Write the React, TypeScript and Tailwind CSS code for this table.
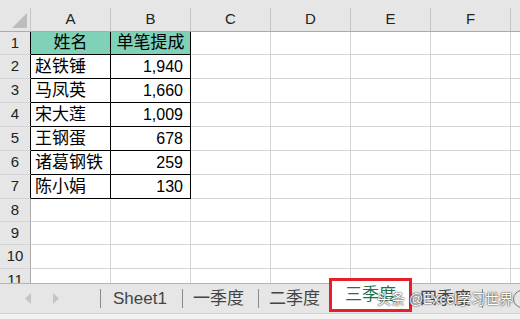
import * as React from 'react';

const COLS = ['A', 'B', 'C', 'D', 'E', 'F', 'G'];
const ROW_H = [23, 24, 24, 24, 24, 24, 24, 23, 23, 24, 24];

const DATA: [string, string][] = [
  ['姓名', '单笔提成'],
  ['赵铁锤', '1,940'],
  ['马凤英', '1,660'],
  ['宋大莲', '1,009'],
  ['王钢蛋', '678'],
  ['诸葛钢铁', '259'],
  ['陈小娟', '130'],
];

const FONT = "font-['Liberation_Sans','Noto_Sans_CJK_SC',sans-serif]";

function ColumnHeader() {
  return (
    <div className="flex h-[24px] shrink-0 border-b border-[#ababab] bg-[#e6e6e6]">
      <div className="relative w-[31px] shrink-0 border-r border-[#c6c6c6]">
        {/* select-all corner */}
        <svg className="absolute bottom-[3px] right-[3px]" width="15" height="15" viewBox="0 0 15 15">
          <polygon points="15,0 15,15 0,15" fill="#bdbdbd" />
        </svg>
      </div>
      {COLS.map(c => (
        <div
          key={c}
          className="flex w-[80px] shrink-0 items-center justify-center border-r border-[#c6c6c6] text-[15px] text-[#222]"
        >
          {c}
        </div>
      ))}
    </div>
  );
}

function Row({ n, h }: { n: number; h: number }) {
  const rec = DATA[n - 1];
  const inTable = !!rec;
  const head = n === 1;
  return (
    <div className="flex shrink-0" style={{ height: h }}>
      <div
        className={`flex w-[31px] shrink-0 items-center justify-center border-b border-r bg-[#e6e6e6] text-[15px] text-[#222] ${
          inTable ? 'border-b-[#d4d4d4] border-r-black' : 'border-b-[#d4d4d4] border-r-[#ababab]'
        }`}
      >
        {n}
      </div>
      {COLS.map((c, i) => {
        const tableCell = inTable && i < 2;
        const border = tableCell ? 'border-black' : 'border-[#d4d4d4]';
        let content: React.ReactNode = null;
        let align = '';
        if (tableCell) {
          content = rec[i];
          if (head) align = 'justify-center';
          else align = i === 0 ? 'justify-start pl-[4px]' : 'justify-end pr-[7px]';
        }
        return (
          <div
            key={c}
            className={`flex w-[80px] shrink-0 items-center border-b border-r ${border} ${align} ${
              head && tableCell ? 'bg-[#7fd1b8]' : 'bg-white'
            } ${i === 0 || head ? 'text-[17px]' : 'text-[16px]'} whitespace-nowrap text-black`}
          >
            {content}
          </div>
        );
      })}
    </div>
  );
}

function Sep() {
  return <div className="h-[19px] w-px shrink-0 bg-[#8a8a8a]" />;
}

function TabBar() {
  return (
    <div className="relative flex h-[30px] shrink-0 items-center whitespace-nowrap border-t border-[#b3b3b3] bg-[#e6e6e6] text-[17px] text-[#444]">
      <div className="flex w-[100px] shrink-0 items-center gap-[22px] pl-[25px]">
        <svg width="6" height="11" viewBox="0 0 6 11">
          <polygon points="6,0 6,11 0,5.5" fill="#c4c4c4" />
        </svg>
        <svg width="6" height="11" viewBox="0 0 6 11">
          <polygon points="0,0 0,11 6,5.5" fill="#c4c4c4" />
        </svg>
      </div>
      <Sep />
      <div className="w-[81px] shrink-0 pl-[12px]">Sheet1</div>
      <Sep />
      <div className="w-[75px] shrink-0 pl-[10px]">一季度</div>
      <Sep />
      <div className="w-[70px] shrink-0 pl-[10px]">二季度</div>
      <div className="-mt-[6px] flex h-[34px] w-[83px] shrink-0 items-center justify-center self-start border-[3px] border-[#e4202b] bg-white text-[#217346]">
        三季度
      </div>
      <div className="w-[70px] shrink-0 pl-[8px]">四季度</div>
      <Sep />
      <div className="ml-[30px] h-[18px] w-[18px] shrink-0 rounded-full border border-[#777]" />
      {/* watermark */}
      <div
        className="absolute left-[377px] top-[5px] text-[14px] text-white"
        style={{ textShadow: '0 0 2px #333, 0 0 1px #333' }}
      >
        头条 @Excel学习世界
      </div>
    </div>
  );
}

export default function App() {
  return (
    <div className={`flex h-[319px] w-[520px] flex-col overflow-hidden bg-white ${FONT}`}>
      <div className="h-[8px] shrink-0 bg-[#e6e6e6]" />
      <ColumnHeader />
      <div className="flex flex-1 flex-col overflow-hidden">
        {ROW_H.map((h, i) => (
          <Row key={i} n={i + 1} h={h} />
        ))}
      </div>
      <TabBar />
      <div className="h-[6px] shrink-0 border-t border-[#d0d0d0] bg-[#f3f3f3]" />
    </div>
  );
}
